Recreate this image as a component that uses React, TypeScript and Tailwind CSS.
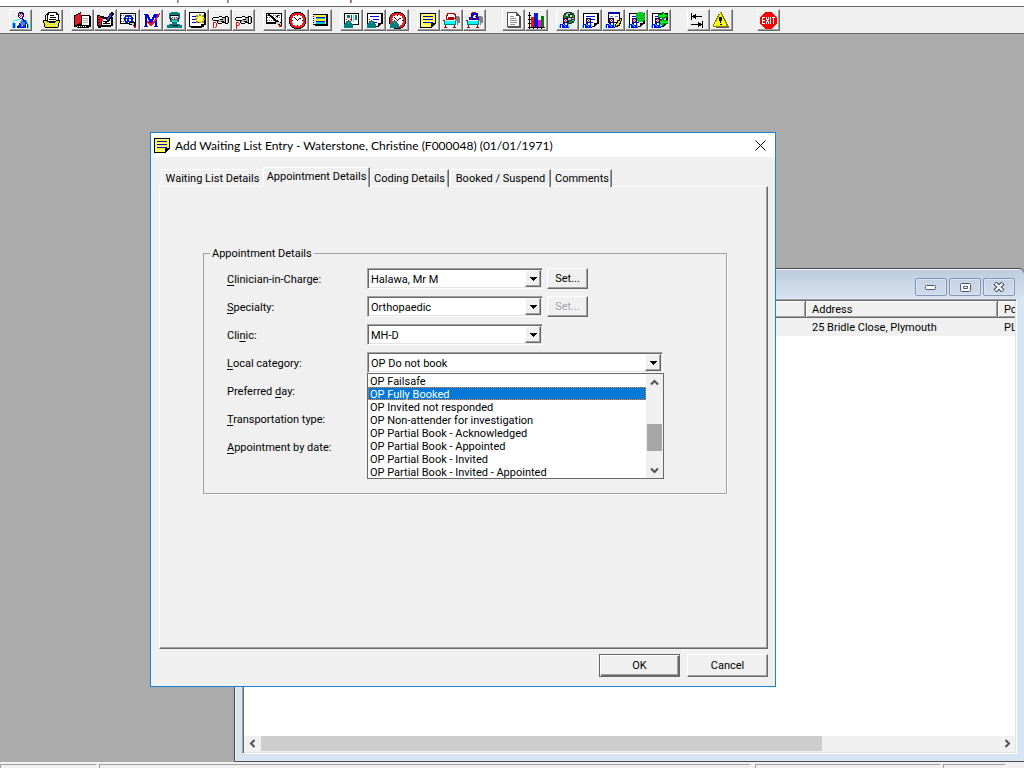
import React from "react";

const raised =
  "border border-t-white border-l-white border-r-[#696969] border-b-[#696969] bg-[#f0f0f0] shadow-[inset_-1px_-1px_0_#a0a0a0]";
const sunken =
  "border border-t-[#a0a0a0] border-l-[#a0a0a0] border-r-white border-b-white bg-white shadow-[inset_1px_1px_0_#696969,inset_-1px_-1px_0_#e3e3e3]";

/* Toolbar drawings, on a 17 x 17 pixel grid */
const Small = () => (
  <>
    <path fill="#000080" d="M4 6h5v5H4z" />
    <path fill="#fff" d="M5 7h3v3H5z" />
    <path fill="#e00000" d="M5 7h1v1H5zM7 7h1v1H7zM6 8h1v1H6zM5 9h1v1H5zM7 9h1v1H7z" />
    <path fill="#00f" d="M1 12h3v-1h5v1h1v4H1z" />
    <path fill="#0ff" d="M0 13h1v3H0zM4 12h1v1H4zM5 13h1v1H5zM6 14h1v1H6zM9 12h1v3H9z" />
    <path fill="#fff" d="M2 13h1v3H2zM6 11h2v2H6z" />
  </>
);
const Surgeon = () => (
  <>
    <path fill="#008080" d="M3 7h5v4H3zM1 12h1v-1h7v1h1v4H1z" />
    <path fill="#fff" d="M3 7h5v2H3z" />
    <path fill="#e00000" d="M3 7h1v1H3zM7 7h1v1H7zM5 8h1v1H5z" />
    <path fill="#808080" d="M5 10h1v2H5z" />
  </>
);
const Hand = () => (
  <>
    <path fill="#b0b0b0" d="M5 5h11v6H6z" />
    <path fill="#000" d="M1 5h6v1H1zM0 6h1v2H0zM1 8h6v1H1zM7 4h3v1H7zM10 5h3v1h-3zM13 4h3v1h-3zM13 5h1v7h-1zM16 5h1v6h-1zM5 9h1v2H5zM6 11h4v1H6zM10 10h3v1h-3zM14 11h2v1h-2zM8 7h3v1H8zM9 9h3v1H9z" />
    <path fill="#fff" d="M1 6h6v2H1zM7 5h3v2H7zM7 10h3v1H7zM14 5h1v6h-1z" />
  </>
);
const Clock = () => (
  <>
    <path fill="#000" d="M5 0h7v1h2v1h1v1h1v2h1v7h-1v2h-1v1h-1v1h-2v1H5v-1H3v-1H2v-1H1v-2H0V5h1V3h1V2h1V1h2z" />
    <path fill="#f01818" d="M5 1h7v1h2v1h1v2h1v7h-1v2h-1v1h-2v1H5v-1H3v-1H2v-2H1V5h1V3h1V2h2z" />
    <path fill="#fff" d="M6 3h5v1h2v2h1v5h-1v2h-2v1H6v-1H4v-2H3V6h1V4h2z" />
    <path fill="#000" d="M5 5h1v1H5zM6 6h1v1H6zM7 7h1v1H7zM8 8h1v1H8zM9 7h1v1H9zM10 6h2v1h-2zM8 3h1v1H8zM8 13h1v1H8zM3 8h1v1H3zM13 8h1v1h-1z" />
  </>
);
const Sheet = () => (
  <>
    <path fill="#000" d="M1 1h16v11h-2v1h-1v1h-1v1H1z" />
    <path fill="#fff" d="M2 2h13v9h-3v3H2z" />
    <path fill="#0000e0" d="M4 4h9v1H4zM4 7h9v1H4zM4 10h7v1H4z" />
  </>
);
const Note = () => (
  <>
    <path fill="#000" d="M0 1h16v11h-1v1h-1v1h-1v1h-1v1H0z" />
    <path fill="#ffff40" d="M1 2h14v9h-4v4H1z" />
    <path stroke="#fff" strokeDasharray="1 1" d="M2 2.500h12M2 6.500h12M2 9.500h11M2 13.500h8" />
    <path fill="#0000c0" d="M3 4h10v1H3zM3 7h10v1H3zM3 10h10v1H3z" />
  </>
);
const Couch = () => (
  <>
    <path fill="#808080" d="M12 4h4v1h1v6h-2v2h-1V9h-2z" />
    <path fill="#0ff" d="M1 9h12v3H1z" />
    <path fill="#008080" d="M1 12h12v1H1zM12 9h1v3h-1zM1 9h1v3H1z" />
    <path fill="#a00000" d="M0 8h2v1H0zM2 13h1v2h1v1H1v-1h1zM11 13h1v2h1v1h-3v-1h1z" />
  </>
);

const icons: Record<string, React.ReactNode> = {
  Patient: (
    <>
      <path fill="#0ff" d="M5 7h3v1h1v8H0v-5h1V9h1V8h3zM11 7h1v1h3v2h1v2h1v4h-2z" />
      <path fill="#fff" d="M5 8h3v8H4v-5H3v5H1v-5h1V9h3zM8 6h2v3H8z" />
      <path fill="#0020e8" d="M1 11h2v5H1zM10 7h2v1h2v2h1v2h1v2h-1v-1h-1v3H6v-3h1v-2h1v-1h2z" />
      <path fill="#5080c0" d="M9 8h2v2h2v3h-2v2H9v-3H8v-2h1z" />
      <path fill="#fff" d="M14 12h1v4h-1zM10 13h1v1h-1z" />
      <path fill="#000" d="M15 14h1v2h-1zM5 14h1v2H5z" />
      <path fill="#000080" d="M7 0h4v1h1v4h-1v2H8V6H7V5H6V1h1z" />
      <path fill="#fff" d="M7 2h4v3H7zM8 5h2v1H8z" />
      <path fill="#e01020" d="M7 1h1v1H7zM9 1h1v1H9zM8 2h1v1H8zM10 2h1v1h-1zM7 3h1v1H7zM9 3h1v1H9zM8 4h1v1H8zM10 4h1v1h-1z" />
    </>
  ),
  Files: (
    <>
      <path fill="#000" d="M5 0h9v1h1v1h1v8H2V3h1V2h1V1h1z" />
      <path fill="#fff" d="M6 1h7v2h2v6H5V3h1zM3 3h1v6H3z" />
      <path fill="#000" d="M7 3h4v1H7zM7 5h6v1H7zM6 7h7v1H6z" />
      <path fill="#000" d="M0 8h4v1h2v1h6V9h1V8h4v3h-1v4h-1v1H2v-1H1v-4H0z" />
      <path fill="#e8e000" d="M1 9h3v1h2v1h6v-1h1V9h3v2h-1v4H2v-4H1z" />
      <path stroke="#fff" strokeDasharray="1 1" d="M2 11.500h13M3 13.500h11" />
    </>
  ),
  "Open record": (
    <>
      <path fill="#000" d="M7 3h9v1h1v11h-2v1H3v-1H0V3h2V2h2V1h2V0h1z" />
      <path fill="#fff" d="M8 4h7v9H8z" />
      <path fill="#b0b0b0" d="M9 6h5v1H9zM9 8h5v1H9zM9 10h5v1H9z" />
      <path fill="#e81828" d="M1 4h1V3h2V2h2V1h1v10H5v1H3v1H1z" />
      <path stroke="#fff" strokeDasharray="1 1" d="M3 14.500h9" />
    </>
  ),
  "Edit record": (
    <>
      <path fill="#000" d="M0 3h3v1h4v1h9v9h-2v1H4v1H1v-2H0z" />
      <path fill="#fff" d="M5 7h9v6H5z" />
      <path fill="#e81828" d="M1 4h2v2h3v3H4v4H1z" />
      <path fill="#000" d="M1 7h2v1H1zM1 10h2v1H1zM6 11h7v1H6zM6 9h2v1H6z" />
      <path fill="#000" d="M14 0h2v1h1v2h-1v1h-1v2h-1v1h-1v2h-1v1h-2v1H8V9h1V7h1V5h1V4h1V2h1V1h1z" />
      <path fill="#3040d0" d="M13 2h2v1h-1v2h-1v1h-1v2h-2V6h1V5h1V3h1z" />
      <path fill="#fff" d="M9 8h1v1H9z" />
    </>
  ),
  "Find record": (
    <>
      <path fill="#000" d="M0 1h16v11H0z" />
      <path fill="#fff" d="M1 2h14v9H1z" />
      <path stroke="#606060" strokeDasharray="1 1" d="M1 3.500h14M1 9.500h13M1 6.500h14" />
      <path fill="#0020d0" d="M6 3h5v1h1v1h1v5h-5v1H5V9H4V5h1V4h1z" />
      <path fill="#fff" d="M6 5h2v1H6zM9 5h2v1H9zM6 7h1v2H6zM9 7h2v2H9z" />
      <path fill="#000" d="M9 10h6v1h1v3h-3v-1H9z" />
      <path fill="#d0d0d0" d="M10 11h4v2h-2v-1h-2z" />
      <path fill="#e00000" d="M14 14h2v2h-2z" />
    </>
  ),
  Merge: (
    <>
      <path fill="#fff" d="M0 0h17v17H0z" />
      <path fill="#0000e0" d="M1 2h4v1h1v2h1v2h2V5h1V3h1V2h4v1h-1v11h1v1h-4v-1h1V6h-1v2h-1v2h-1v2H7v-2H6V8H5V6H4v8h1v1H1v-1h1V3H1z" />
      <path fill="#e81828" d="M16 1h1v2h-1v2h-1v1h-1v2h-1v1h-1v2h-1v1h-1v1H9v1H7v-1H6v-1H5v-1H4V9h2v1h1v1h2v-1h1V9h1V8h1V6h1V5h1V3h1V2h1z" />
    </>
  ),
  Surgeon: (
    <>
      <path fill="#008080" d="M5 0h7v1h2v6h-1v3h-2v2h3v1h2v3H1v-3h2v-1h3v-2H4V7H3V1h2z" />
      <path fill="#000" d="M4 3h9v1H4zM4 6h1v2H4zM12 6h1v2h-1zM6 13h6v1H6z" />
      <path fill="#fff" d="M5 4h7v3H5z" />
      <path fill="#0000c0" d="M6 5h1v1H6zM10 5h1v1h-1z" />
      <path fill="#e00000" d="M8 5h1v2H8zM5 6h1v1H5zM11 6h1v1h-1z" />
      <path fill="#40c0c0" d="M6 8h5v2H6z" />
    </>
  ),
  "New entry": (
    <>
      <path fill="#000" d="M0 0h16v1h1v12h-2v2h-2v1H2v-1H0z" />
      <path fill="#fff" d="M1 1h14v11h-3v2H1z" />
      <path fill="#0000d0" d="M3 4h5v1H3zM3 7h5v1H3zM3 10h7v1H3z" />
      <path fill="#a09000" d="M10 2h2v9h-2zM6 6h10v2H6zM7 3h2v2H7zM13 3h2v2h-2zM7 9h2v2H7zM13 9h2v2h-2z" />
      <path fill="#ffff30" d="M9 4h4v1h1v4h-1v1H9V9H8V5h1z" />
      <path fill="#fff" d="M10 6h2v2h-2z" />
    </>
  ),
  "Hand D": (
    <>
      <Hand />
      <path fill="#e81010" d="M1 10h3v1h1v4H4v-4H2v5H1zM3 15h1v1H3z" />
    </>
  ),
  "Hand P": (
    <>
      <Hand />
      <path fill="#e81010" d="M1 10h3v1h1v2H4v-2H2v2h2v1H2v3H1z" />
    </>
  ),
  "Write letter": (
    <>
      <path fill="#000" d="M0 1h16v11H0z" />
      <path fill="#fff" d="M1 2h14v8H1z" />
      <path stroke="#707070" strokeDasharray="1 1" d="M1 3.500h14M1 5.500h14M1 8.500h12" />
      <path fill="#000" d="M2 2h2v1h1v1h2v1h1v1h1v1h1v1h2v1h1v1h1v2h-3v-1H9V9H8V8H7V7H6V6H5V5H4V4H2zM11 3h2v1h-1v1h-2V4h1z" />
      <path fill="#d0d0d0" d="M10 10h4v1h1v2h-2v-1h-3z" />
      <path fill="#000" d="M15 9h1v4h-1zM12 12h2v1h-2z" />
      <path fill="#e00000" d="M13 13h3v2h-3z" />
    </>
  ),
  Clock: <Clock />,
  Schedule: (
    <>
      <path fill="#000" d="M1 2h15v12H3v-1H1z" />
      <path fill="#e0e0e0" d="M2 3h12v9H2z" />
      <path fill="#ff0" d="M4 3h9v2H4zM4 7h9v2H4z" />
      <path fill="#0000e0" d="M4 5h9v1H4zM4 9h9v1H4z" />
      <path fill="#00c8c8" d="M4 6h9v1H4zM4 10h9v2H4z" />
      <path stroke="#fff" strokeDasharray="1 1" d="M1.500 3v10" />
    </>
  ),
  "Clinic chart": (
    <>
      <path fill="#000" d="M1 1h15v12H1z" />
      <path fill="#fff" d="M2 2h13v10H2z" />
      <path fill="#008080" d="M4 3h3v3H4zM12 3h2v5h-2z" />
      <path fill="#e00000" d="M8 3h1v6H8z" />
      <path fill="#0ff" d="M10 3h1v7h-1z" />
      <path stroke="#000" strokeDasharray="1 1" d="M1.500 2v11" />
      <Surgeon />
    </>
  ),
  "Clinic sheet": (<><Sheet /><Surgeon /></>),
  "Clinic clock": (<><Clock /><Surgeon /></>),
  "Waiting list": <Note />,
  Bed: (
    <>
      <Couch />
      <path fill="#a00000" d="M4 1h8v1h1v5h-2v1H3V3h1z" />
      <path fill="#fff" d="M5 2h6v1h1v3h-1V5H5v2H4V4h1z" />
    </>
  ),
  "Occupied bed": (
    <>
      <Couch />
      <path fill="#0000d0" d="M5 1h7v4h1v3H3V5h2z" />
      <path fill="#fff" d="M7 3h3v3H7z" />
      <path fill="#e00000" d="M6 0h4v1H6zM7 3h1v1H7zM9 4h1v1H9zM4 6h2v1H4zM10 6h2v1h-2z" />
    </>
  ),
  Document: (
    <>
      <path fill="#505050" d="M2 0h10v1h1v1h1v1h1v1h1v12H3v-1H2z" />
      <path fill="#fff" d="M3 1h8v3h3v10H3z" />
      <path fill="#909090" d="M5 4h4v1H5zM5 6h6v1H5zM5 8h7v1H5zM5 10h7v1H5zM5 12h5v1H5z" />
    </>
  ),
  Chart: (
    <>
      <path fill="#000" d="M1 0h1v17H1zM0 15h17v1H0zM0 3h3v1H0zM0 7h3v1H0zM0 11h3v1H0zM5 14h1v3H5zM9 14h1v3H9zM13 14h1v3h-1z" />
      <path fill="#f01010" d="M3 5h3v10H3z" />
      <path fill="#0020d0" d="M6 1h4v14H6z" />
      <path fill="#f0f" d="M10 8h3v7h-3z" />
      <path fill="#008000" d="M13 4h3v11h-3z" />
    </>
  ),
  "Patient disc": (
    <>
      <path fill="#303030" d="M7 0h6v1h2v2h1v6h-1v2h-2v1H6V8H4V3h1V1h2z" />
      <path fill="#00a000" d="M5 3h2v3H5zM10 9h3v2h-3zM13 3h2v2h-2zM8 4h2v1H8z" />
      <path fill="#0ff" d="M8 1h3v1H8zM13 8h2v1h-2z" />
      <path fill="#d0d0d0" d="M7 2h2v2H7zM11 3h2v2h-2zM9 6h3v2H9zM13 6h2v1h-2z" />
      <Small />
    </>
  ),
  "Patient sheet": (<><Sheet /><Small /></>),
  "Patient notes": (
    <>
      <path fill="#000" d="M3 0h12v11H3z" />
      <path fill="#fff" d="M4 2h10v8H4z" />
      <path fill="#0000a0" d="M3 0h12v2H3z" />
      <path fill="#8080e0" d="M5 4h3v1H5zM10 4h3v1h-3zM5 7h3v1H5z" />
      <path fill="#000" d="M14 6h3v3h-1v3h-1v2h-2v1h-3v-3h1v-2h1V8h2z" />
      <path fill="#ffe000" d="M15 7h1v2h-1v2h-1v2h-2v1h-1v-2h1v-1h1V9h2z" />
      <Small />
    </>
  ),
  "Patient location": (
    <>
      <Sheet />
      <path fill="#00d020" d="M10 0h5v1h1v1h1v6h-1v1h-1v1h-5V9H9V8H8V2h1V1h1z" />
      <path stroke="#008000" strokeDasharray="1 1" d="M9 3.500h7M8 6.500h8" />
      <Small />
    </>
  ),
  "Patient transfer": (
    <>
      <Sheet />
      <path fill="#008000" d="M11 0h2v1h1v1h2v1h1v2h-1v1h-2v1h-3V6H7V2h4zM10 7h3v1h4v4h-4v2h-2v-1h-1v-1H9v-1H8V9h1V8h1z" />
      <path fill="#00f020" d="M12 1h1v1h1v1h2v1h-2v1h-1v1h-1V5H8V3h4zM11 8h1v1h5v2h-5v2h-1v-1h-1v-1H9V9h2z" />
      <Small />
    </>
  ),
  Swap: (
    <path
      fill="#000"
      d="M1 1h1v7H1zM2 4h10v1H2zM3 3h3v3H3zM5 2h1v5H5zM12 9h1v7h-1zM1 12h11v1H1zM8 11h3v3H8zM8 10h1v5H8z"
    />
  ),
  Warning: (
    <>
      <path fill="#606060" d="M9 2h1v2h1v2h1v2h1v2h1v2h1v2h1v2H3v-1z" />
      <path fill="#808000" d="M7 0h2v2h1v2h1v2h1v2h1v2h1v2h1v3H0v-3h1v-2h1V8h1V6h1V4h1V2h2z" />
      <path fill="#ff0" d="M7 1h1v2h1v2h1v2h1v2h1v2h1v3H1v-2h1v-2h1V9h1V7h1V5h1V3h1z" />
      <path fill="#000" d="M6 5h3v4H8v2H7V9H6zM7 12h2v1H7z" />
    </>
  ),
  Exit: (
    <>
      <path fill="#f00" d="M5 0h7v1h1v1h1v1h1v1h1v1h1v7h-1v1h-1v1h-1v1h-1v1h-1v1H5v-1H4v-1H3v-1H2v-1H1v-1H0V5h1V4h1V3h1V2h1V1h1z" />
      <path fill="#fff" d="M2 5h3v1H3v2h2v1H3v2h2v1H2zM6 5h1v2h1V5h1v3H8v1h1v3H8v-2H7v2H6V9h1V8H6zM10 5h1v7h-1zM12 5h3v1h-1v6h-1V6h-1z" />
    </>
  ),
};

const groups: { gap: string; items: string[] }[] = [
  { gap: "", items: ["Patient"] },
  { gap: "ml-2", items: ["Files"] },
  { gap: "ml-2", items: ["Open record", "Edit record", "Find record", "Merge", "Surgeon", "New entry", "Hand D", "Hand P"] },
  { gap: "ml-2", items: ["Write letter", "Clock", "Schedule"] },
  { gap: "ml-2", items: ["Clinic chart", "Clinic sheet", "Clinic clock"] },
  { gap: "ml-2", items: ["Waiting list", "Bed", "Occupied bed"] },
  { gap: "ml-4", items: ["Document", "Chart"] },
  { gap: "ml-2", items: ["Patient disc", "Patient sheet", "Patient notes", "Patient location", "Patient transfer"] },
  { gap: "ml-4", items: ["Swap", "Warning"] },
  { gap: "ml-6", items: ["Exit"] },
];

function Toolbar() {
  return (
    <div className="flex h-7 shrink-0 items-start border-y border-[#696969] bg-[#f0f0f0] pt-0.5 pl-[9px]">
      {groups.map((g) => (
        <div key={g.items[0]} className={`flex shrink-0 ${g.gap}`}>
          {g.items.map((name) => (
            <button key={name} aria-label={name} className={`flex h-[22px] w-[23px] items-start pt-0.5 pl-0.5 ${raised}`}>
              <svg width="17" height="17" viewBox="0 0 17 17" shapeRendering="crispEdges">
                {icons[name]}
              </svg>
            </button>
          ))}
        </div>
      ))}
    </div>
  );
}

function Combo({ id, value, wide }: { id: string; value?: string; wide?: boolean }) {
  return (
    <div className={`relative h-[21px] ${sunken} ${wide ? "w-[296px]" : "w-44"}`}>
      <select id={id} defaultValue={value} className="h-full w-full appearance-none bg-transparent pt-0.5 pl-[3px] outline-none">
        {value && <option>{value}</option>}
      </select>
      <span className={`pointer-events-none absolute top-px right-px bottom-px flex w-4 items-center justify-center ${raised}`}>
        <svg width="7" height="4" viewBox="0 0 7 4" shapeRendering="crispEdges">
          <path d="M0 0h7v1H6v1H5v1H4v1H3V3H2V2H1V1H0z" />
        </svg>
      </span>
    </div>
  );
}

function Field({ id, text, letter, children }: { id: string; text: string; letter: number; children: React.ReactNode }) {
  return (
    <div className="flex h-[21px] items-center">
      <label htmlFor={id} className="w-[140px] shrink-0 pt-px">
        {text.slice(0, letter)}
        <u className="underline-offset-2">{text[letter]}</u>
        {text.slice(letter + 1)}
      </label>
      {children}
    </div>
  );
}

const options = [
  "OP Failsafe",
  "OP Fully Booked",
  "OP Invited not responded",
  "OP Non-attender for investigation",
  "OP Partial Book - Acknowledged",
  "OP Partial Book - Appointed",
  "OP Partial Book - Invited",
  "OP Partial Book - Invited - Appointed",
];

const Chevron = ({ turn }: { turn: string }) => (
  <svg width="9" height="9" viewBox="0 0 9 9" className={turn} fill="none" stroke="#505050" strokeWidth="2">
    <path d="M1 6.500L4.500 3L8 6.500" />
  </svg>
);

function OptionList() {
  return (
    <div className="absolute top-[21px] left-0 z-10 flex w-[297px] border border-[#696969] bg-white">
      <ul role="listbox" aria-label="Local category" className="min-w-0 flex-1">
        {options.map((o, i) => (
          <li
            key={o}
            role="option"
            aria-selected={i === 1}
            className={`h-[13px] px-0.5 leading-[15px] whitespace-nowrap ${i === 1 ? "bg-[#0078d7] text-white outline-1 -outline-offset-1 outline-dotted outline-[#ff8728]" : ""}`}
          >
            {o}
          </li>
        ))}
      </ul>
      <div className="flex w-[17px] flex-col items-center bg-[#f0f0f0] px-px">
        <span className="flex h-4 items-center"><Chevron turn="" /></span>
        <span className="mt-[34px] h-[27px] w-full bg-[#a6a6a6]" />
        <span className="mt-auto flex h-4 items-center"><Chevron turn="rotate-180" /></span>
      </div>
    </div>
  );
}

function PushButton({ children, className, disabled }: { children: React.ReactNode; className: string; disabled?: boolean }) {
  return (
    <button disabled={disabled} className={`${raised} disabled:text-[#a0a0a0] disabled:[text-shadow:1px_1px_0_#fff] ${className}`}>
      {children}
    </button>
  );
}

const tabShape = "h-[18px] border-t border-l border-white";
const tabEdge = "border-r border-r-[#696969] shadow-[inset_-1px_0_0_#a0a0a0]";

function Dialog() {
  return (
    <section
      role="dialog"
      aria-labelledby="dialog-title"
      className="absolute top-[98px] left-[150px] flex h-[555px] w-[626px] flex-col border border-[#1883d7] bg-[#f0f0f0]"
    >
      <header className="flex h-6 shrink-0 items-center bg-white pr-[9px] pl-[3px]">
        <svg width="16" height="17" viewBox="0 0 16 17" shapeRendering="crispEdges" aria-hidden="true"><Note /></svg>
        <h1 id="dialog-title" className="ml-[5px] flex-1 font-['Lato',sans-serif] text-[12px] whitespace-nowrap">
          Add Waiting List Entry - Waterstone, Christine (F000048) (01/01/1971)
        </h1>
        <button aria-label="Close">
          <svg width="11" height="11" viewBox="0 0 11 11" stroke="#000"><path d="M.5 .5l10 10M10.500 .5l-10 10" /></svg>
        </button>
      </header>
      <div className="flex flex-1 flex-col pt-2.5 pr-[7px] pb-[9px] pl-2">
        <div role="tablist" className="z-10 -mb-px flex items-end pl-0.5">
          <button role="tab" aria-selected="false" className={`w-[102px] ${tabShape}`}>Waiting List Details</button>
          <button role="tab" aria-selected="true" className="h-5 w-[107px] border-t border-r border-l border-t-white border-r-[#696969] border-l-white bg-[#f0f0f0] pb-0.5 shadow-[inset_-1px_0_0_#a0a0a0]">
            Appointment Details
          </button>
          <button role="tab" aria-selected="false" className={`w-[79px] ${tabShape} ${tabEdge}`}>Coding Details</button>
          <button role="tab" aria-selected="false" className={`ml-px w-[101px] ${tabShape} ${tabEdge}`}>Booked / Suspend</button>
          <button role="tab" aria-selected="false" className={`ml-px w-[60px] ${tabShape} ${tabEdge}`}>Comments</button>
        </div>
        <div role="tabpanel" className={`flex-1 px-[43px] pt-[58px] ${raised}`}>
          <fieldset className="flex h-[249px] w-[524px] flex-col gap-[7px] border border-[#a0a0a0] px-[23px] pt-[7px] shadow-[1px_1px_0_#fff]">
            <legend className="-ml-[17px] h-4 px-0.5 leading-[18px]">Appointment Details</legend>
            <Field id="clinician" text="Clinician-in-Charge:" letter={0}>
              <Combo id="clinician" value="Halawa, Mr M" />
              <PushButton className="ml-1 h-[21px] w-[41px]">Set...</PushButton>
            </Field>
            <Field id="specialty" text="Specialty:" letter={0}>
              <Combo id="specialty" value="Orthopaedic" />
              <PushButton disabled className="ml-1 h-[21px] w-[41px]">Set...</PushButton>
            </Field>
            <Field id="clinic" text="Clinic:" letter={3}>
              <Combo id="clinic" value="MH-D" />
            </Field>
            <Field id="category" text="Local category:" letter={0}>
              <div className="relative">
                <Combo id="category" value="OP Do not book" wide />
                <OptionList />
              </div>
            </Field>
            <Field id="day" text="Preferred day:" letter={10}><Combo id="day" /></Field>
            <Field id="transport" text="Transportation type:" letter={0}><Combo id="transport" /></Field>
            <Field id="by-date" text="Appointment by date:" letter={0}>
              <input id="by-date" type="text" className={`h-[21px] w-44 ${sunken}`} />
            </Field>
          </fieldset>
        </div>
        <div className="mt-[5px] flex justify-end gap-[7px]">
          <button className="h-[23px] w-[81px] border border-[#696969] bg-[#f0f0f0] shadow-[inset_1px_1px_0_#fff,inset_-1px_-1px_0_#696969,inset_-2px_-2px_0_#a0a0a0]">OK</button>
          <PushButton className="h-[23px] w-[81px]">Cancel</PushButton>
        </div>
      </div>
    </section>
  );
}

const caption =
  "flex h-[18px] w-8 items-center justify-center rounded-[2px] border border-[#8494b8] bg-gradient-to-b from-[#c6d3e3] to-[#cfdceb] shadow-[inset_0_0_0_1px_#dbe5f0]";
const headCell =
  "h-[17px] border-r border-b border-[#696969] bg-[#f0f0f0] p-0 pt-px pl-1.5 text-left font-normal whitespace-nowrap shadow-[inset_1px_1px_0_#fff,inset_-1px_-1px_0_#a0a0a0]";

function ListWindow() {
  return (
    <section className="absolute top-[234px] -right-px bottom-0 left-[234px] flex flex-col rounded-t-[6px] border border-[#4a4a50] bg-[#d7e4f2] bg-gradient-to-b from-[#bccbdc] to-[#d7e4f2] to-[30px] px-[7px] pb-[7px] shadow-[inset_1px_1px_0_#eef4fa]">
      <header className="flex h-[30px] shrink-0 items-start justify-end gap-0.5 pt-[9px] pr-0.5">
        <button aria-label="Minimise" className={caption}>
          <svg width="12" height="5" viewBox="0 0 12 5"><rect x=".5" y=".5" width="10" height="4" rx="1" fill="#fff" stroke="#50566c" /></svg>
        </button>
        <button aria-label="Restore" className={caption}>
          <svg width="11" height="9" viewBox="0 0 11 9" fill="#fff" stroke="#50566c"><rect x=".5" y=".5" width="10" height="8" rx="1" /><path d="M3.500 3.500h4v2h-4z" /></svg>
        </button>
        <button aria-label="Close list" className={caption}>
          <svg width="12" height="10" viewBox="0 0 12 10" fill="none"><path stroke="#50566c" strokeWidth="4.500" d="M2 1l8 8M10 1L2 9" /><path stroke="#fff" strokeWidth="2" d="M2.500 1.500l7 7M9.500 1.500l-7 7" /></svg>
        </button>
      </header>
      <div className={`flex min-h-0 flex-1 flex-col overflow-hidden p-px ${sunken}`}>
        <div className="min-h-0 flex-1 overflow-hidden">
          <table className="w-[980px] table-fixed border-separate border-spacing-0">
            <thead>
              <tr>
                <th aria-label="Name" className={`w-[562px] ${headCell}`} />
                <th className={`w-48 ${headCell}`}>Address</th>
                <th className={headCell}>Postcode</th>
              </tr>
            </thead>
            <tbody>
              <tr className="h-[18px] bg-[#f0f0f0]">
                <td className="p-0" />
                <td className="p-0 pl-1.5">25 Bridle Close, Plymouth</td>
                <td className="p-0 pl-1.5">PL</td>
              </tr>
            </tbody>
          </table>
        </div>
        <div className="flex h-4 shrink-0 bg-[#f0f0f0] pb-px">
          <span className="flex w-[17px] items-center justify-center"><Chevron turn="-rotate-90" /></span>
          <span className="flex-1"><span className="block h-full w-[76%] bg-[#cdcdcd]" /></span>
          <span className="flex w-4 items-center justify-center"><Chevron turn="rotate-90" /></span>
        </div>
      </div>
    </section>
  );
}

const statusCell = "border-t border-r border-l border-t-[#a0a0a0] border-r-white border-l-[#a0a0a0]";

export default function App() {
  return (
    <div className="flex h-screen flex-col overflow-hidden bg-[#f0f0f0] font-['Roboto','Liberation_Sans',sans-serif] text-[11px] leading-[13px] text-black">
      <div className="flex h-1.5 shrink-0 bg-white">
        <span className="ml-[177px] h-[3px] w-0.5 border-r border-l border-r-[#8ab4d8] border-l-[#c07850]" />
        <span className="ml-12 h-[3px] w-0.5 border-r border-l border-r-[#8ab4d8] border-l-[#c07850]" />
        <span className="ml-[121px] h-[3px] w-0.5 border-r border-l border-r-[#9090d0] border-l-[#c05060]" />
      </div>
      <Toolbar />
      <main className="relative min-h-0 flex-1 overflow-hidden bg-[#ababab]">
        <ListWindow />
        <Dialog />
      </main>
      <footer className="flex h-1.5 shrink-0 gap-0.5 pt-0.5">
        <div className={`w-[97px] ${statusCell}`} />
        <div className={`flex-1 ${statusCell}`} />
        <div className={`ml-0.5 w-[186px] ${statusCell}`} />
        <div className={`mr-[18px] w-[63px] ${statusCell}`} />
      </footer>
    </div>
  );
}
